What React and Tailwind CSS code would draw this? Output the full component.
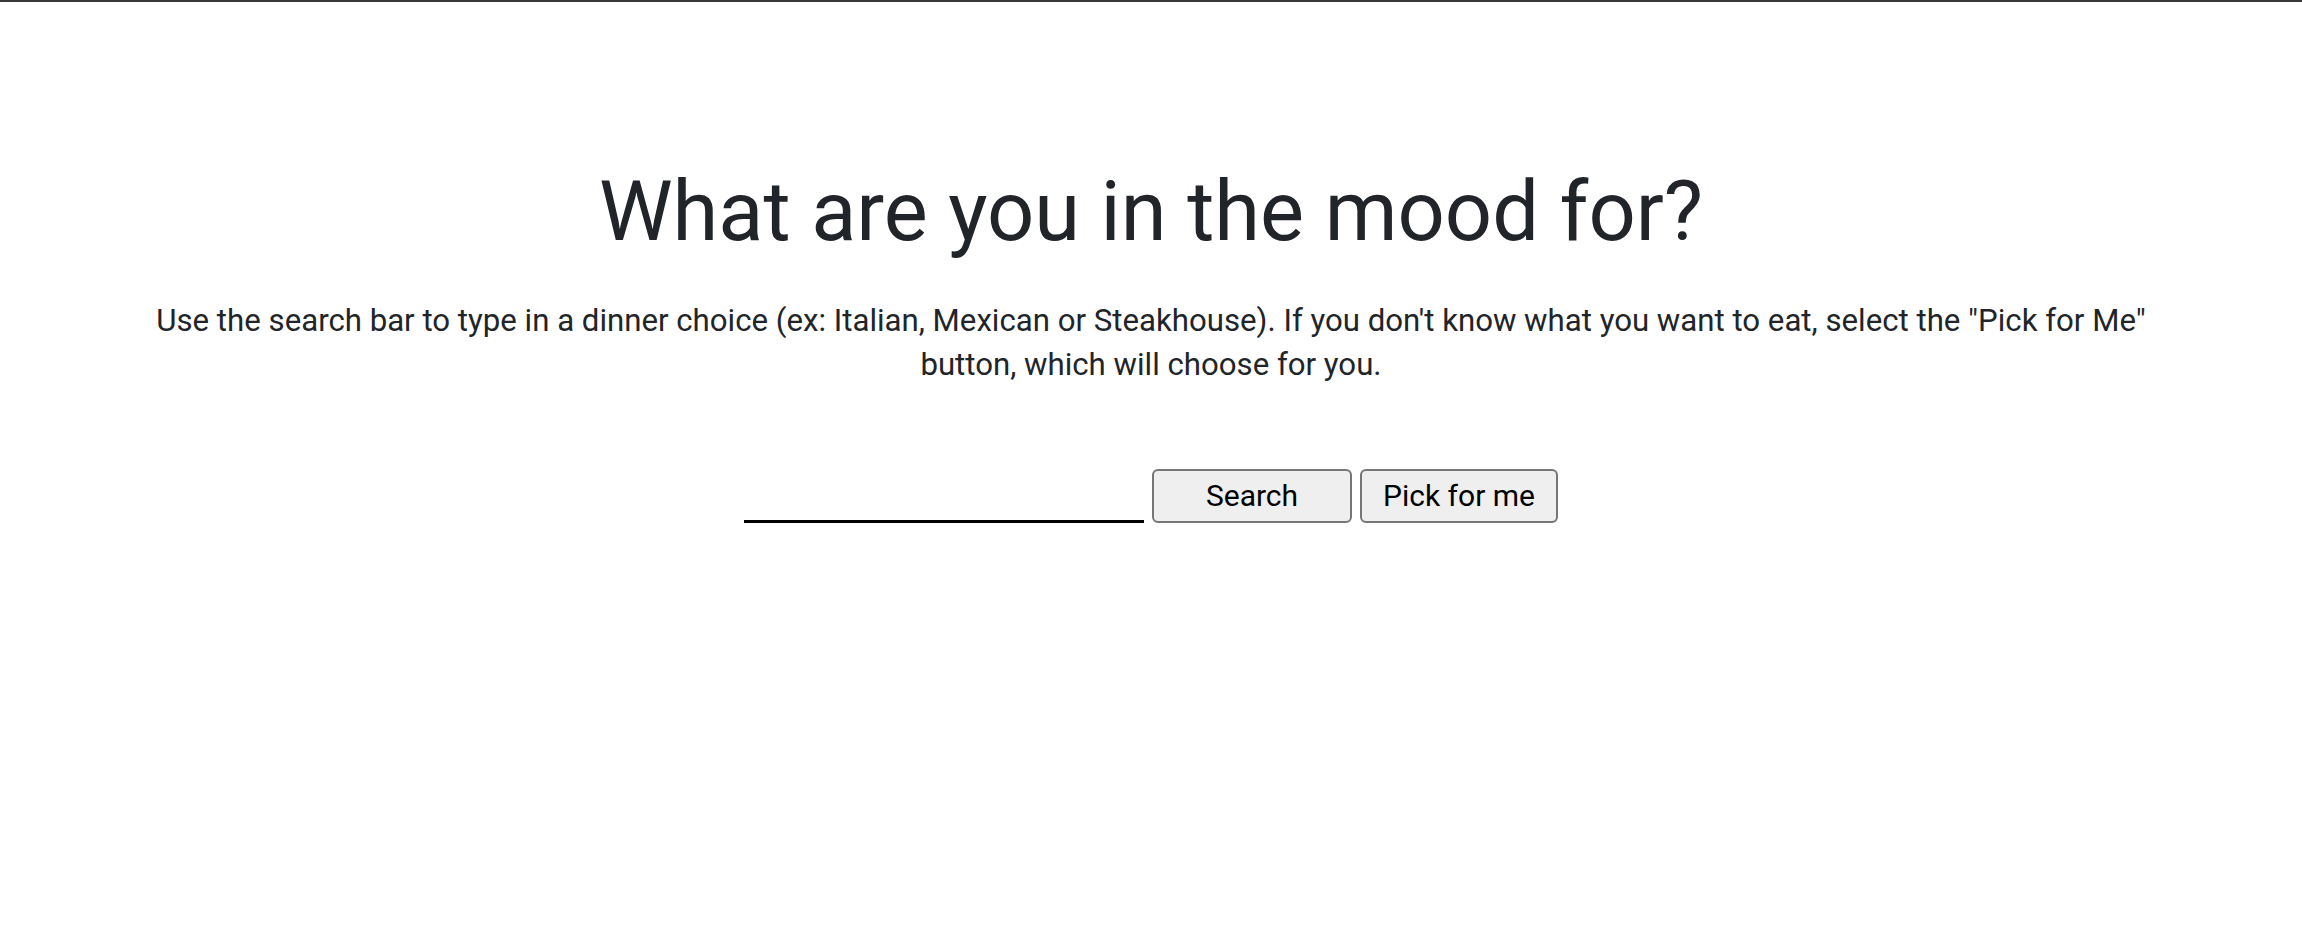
function App() {
  return (
    <div className="min-h-[936px] bg-white border-t-2 border-[#383838] text-[#212529] font-['Roboto',sans-serif]">
      <div className="flex flex-col items-center pt-[160px]">
        <h1 className="text-[83px] leading-[1.2] font-normal text-center">
          What are you in the mood for?
        </h1>
        <p className="mt-[37px] w-[2034px] text-center text-[31.2px] leading-[44px]">
          Use the search bar to type in a dinner choice (ex: Italian, Mexican or Steakhouse). If you don't know what you want to eat, select the "Pick for Me" button, which will choose for you.
        </p>

        <div className="mt-[82px] flex items-end justify-center gap-2">
          <input
            type="text"
            className="w-[400px] h-[40px] border-0 border-b-[3px] border-black outline-none bg-transparent text-[30px]"
          />
          <button className="w-[200px] h-[54px] bg-[#efefef] border-2 border-[#767676] rounded-[6px] text-[30px] text-black">
            Search
          </button>
          <button className="w-[198px] h-[54px] bg-[#efefef] border-2 border-[#767676] rounded-[6px] text-[30px] text-black">
            Pick for me
          </button>
        </div>
      </div>
    </div>
  )
}

export default App
